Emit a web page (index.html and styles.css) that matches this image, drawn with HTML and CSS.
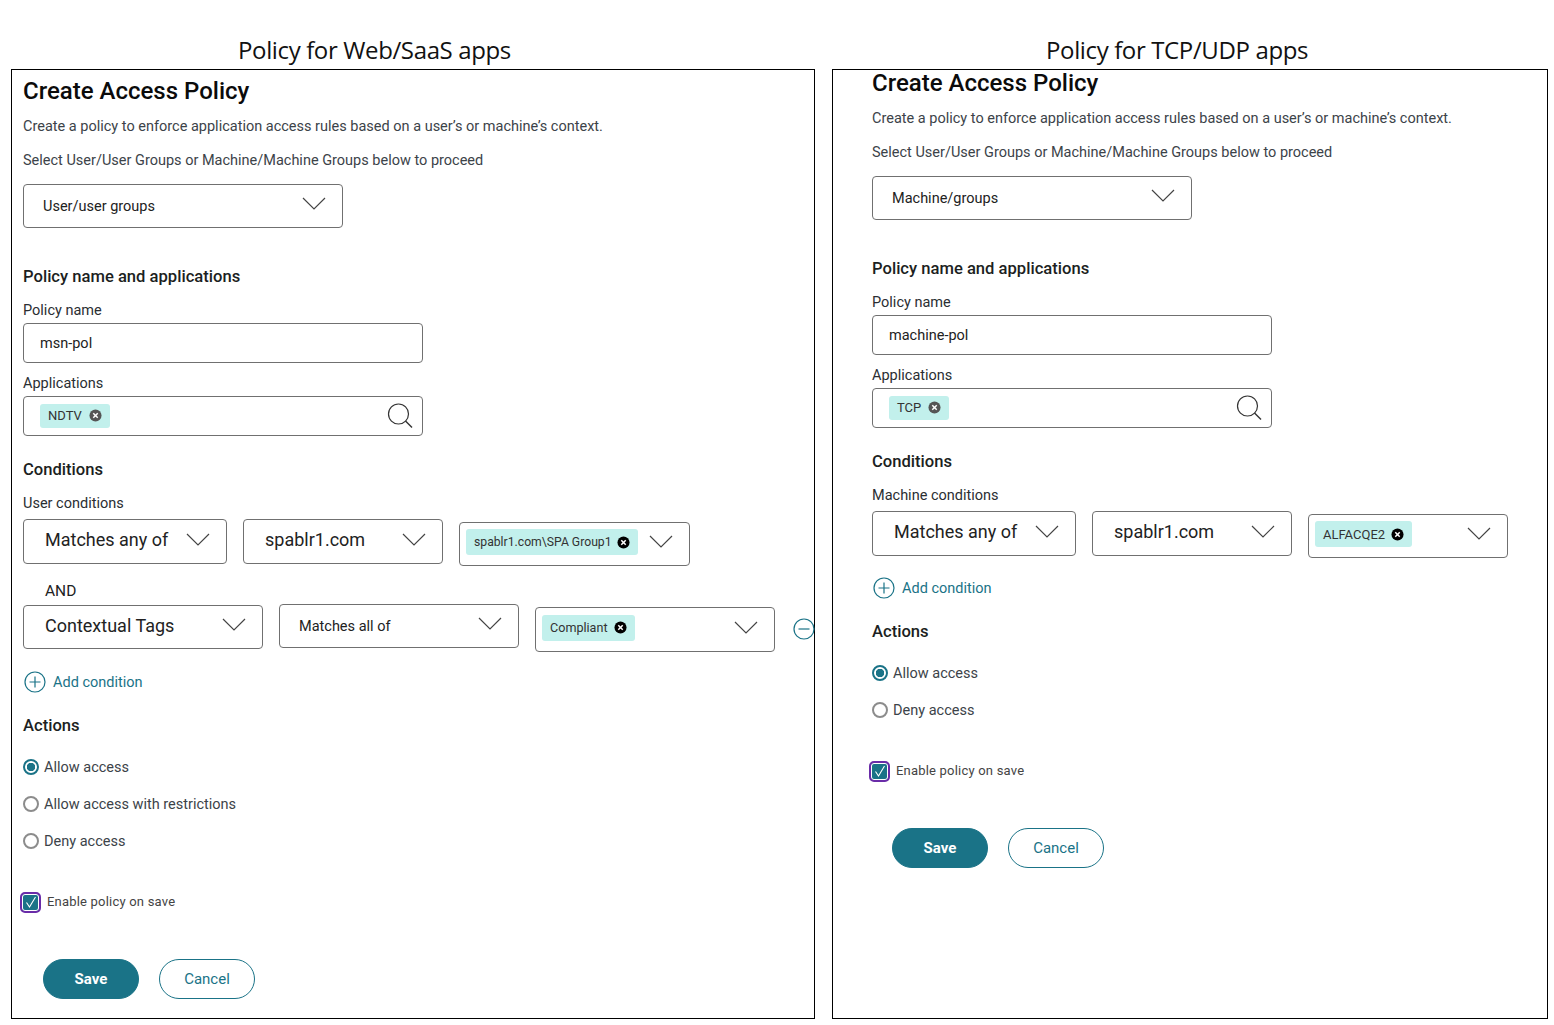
FILE: index.html

```html
<!DOCTYPE html>
<html lang="en">
<head>
  <meta charset="UTF-8" />
  <title>Access policy</title>
  <link rel="stylesheet" href="styles.css">
</head>
<body>
<svg class="defs" width="0" height="0">
  <symbol id="chev" viewBox="0 0 24 13"><polyline points="1,1 12,12 23,1" fill="none" stroke="#444" stroke-width="1.2"/></symbol>
  <symbol id="search" viewBox="0 0 26 26"><circle cx="11.5" cy="11" r="10" fill="none" stroke="#333" stroke-width="1.2"/><line x1="18.5" y1="18" x2="25" y2="24.5" stroke="#333" stroke-width="1.4"/></symbol>
  <symbol id="close" viewBox="0 0 14 14"><circle cx="7" cy="7" r="6.5" fill="currentColor"/><path d="M4.6 4.6l4.8 4.8M9.4 4.6l-4.8 4.8" stroke="#fff" stroke-width="1.6"/></symbol>
  <symbol id="plus" viewBox="0 0 22 22"><circle cx="11" cy="11" r="10" fill="none" stroke="#1a7387" stroke-width="1.2"/><path d="M11 5.5v11M5.5 11h11" stroke="#1a7387" stroke-width="1.2"/></symbol>
  <symbol id="minus" viewBox="0 0 22 22"><circle cx="11" cy="11" r="10" fill="none" stroke="#1a7387" stroke-width="1.2"/><path d="M5.5 11h11" stroke="#1a7387" stroke-width="1.2"/></symbol>
  <symbol id="tick" viewBox="0 0 14 14"><polyline points="2.5,7.5 5.5,12 11.5,2" fill="none" stroke="#fff" stroke-width="1.1"/></symbol>
</svg>

<div class="page">

  <div class="column column-web">
    <div class="caption">Policy for Web/SaaS apps</div>
    <div class="panel">
      <h1>Create Access Policy</h1>
      <p class="desc">Create a policy to enforce application access rules based on a user’s or machine’s context.</p>
      <p class="desc desc-next">Select User/User Groups or Machine/Machine Groups below to proceed</p>
      <div class="select w320 top-select"><span>User/user groups</span><svg class="chev"><use href="#chev"/></svg></div>

      <h2 class="h-policy">Policy name and applications</h2>
      <div class="label first-label">Policy name</div>
      <div class="input">msn-pol</div>
      <div class="label">Applications</div>
      <div class="input input-app">
        <span class="chip">NDTV <svg class="x x-grey"><use href="#close"/></svg></span>
        <svg class="search"><use href="#search"/></svg>
      </div>

      <h2 class="h-conditions">Conditions</h2>
      <div class="label first-label">User conditions</div>
      <div class="row row-first">
        <div class="select big w204"><span>Matches any of</span><svg class="chev"><use href="#chev"/></svg></div>
        <div class="select big w200"><span>spablr1.com</span><svg class="chev"><use href="#chev"/></svg></div>
        <div class="select tags w231 down3"><span class="chip chip-small">spablr1.com\SPA Group1 <svg class="x"><use href="#close"/></svg></span><svg class="chev"><use href="#chev"/></svg></div>
      </div>
      <div class="and">AND</div>
      <div class="row">
        <div class="select big short w240 down1"><span>Contextual Tags</span><svg class="chev"><use href="#chev"/></svg></div>
        <div class="select w240"><span>Matches all of</span><svg class="chev"><use href="#chev"/></svg></div>
        <div class="select tags tall w240 down3"><span class="chip chip-mid chip-tight">Compliant <svg class="x"><use href="#close"/></svg></span><svg class="chev"><use href="#chev"/></svg></div>
        <svg class="remove"><use href="#minus"/></svg>
      </div>
      <div class="add"><svg class="add-icon"><use href="#plus"/></svg>Add condition</div>

      <h2 class="h-actions">Actions</h2>
      <div class="radios">
        <div class="radio on">Allow access</div>
        <div class="radio">Allow access with restrictions</div>
        <div class="radio">Deny access</div>
      </div>
      <div class="enable"><span class="check"><svg class="tick"><use href="#tick"/></svg></span>Enable policy on save</div>
      <div class="buttons">
        <div class="btn btn-save">Save</div>
        <div class="btn btn-cancel">Cancel</div>
      </div>
    </div>
  </div>

  <div class="column column-tcp">
    <div class="caption">Policy for TCP/UDP apps</div>
    <div class="panel">
      <h1>Create Access Policy</h1>
      <p class="desc">Create a policy to enforce application access rules based on a user’s or machine’s context.</p>
      <p class="desc desc-next">Select User/User Groups or Machine/Machine Groups below to proceed</p>
      <div class="select w320 top-select"><span>Machine/groups</span><svg class="chev"><use href="#chev"/></svg></div>

      <h2 class="h-policy">Policy name and applications</h2>
      <div class="label first-label">Policy name</div>
      <div class="input">machine-pol</div>
      <div class="label">Applications</div>
      <div class="input input-app">
        <span class="chip">TCP <svg class="x x-grey"><use href="#close"/></svg></span>
        <svg class="search"><use href="#search"/></svg>
      </div>

      <h2 class="h-conditions">Conditions</h2>
      <div class="label first-label">Machine conditions</div>
      <div class="row row-first">
        <div class="select big w204"><span>Matches any of</span><svg class="chev"><use href="#chev"/></svg></div>
        <div class="select big w200"><span>spablr1.com</span><svg class="chev"><use href="#chev"/></svg></div>
        <div class="select tags w200 down3"><span class="chip chip-mid">ALFACQE2 <svg class="x"><use href="#close"/></svg></span><svg class="chev"><use href="#chev"/></svg></div>
      </div>
      <div class="add add-tcp"><svg class="add-icon"><use href="#plus"/></svg>Add condition</div>

      <h2 class="h-actions">Actions</h2>
      <div class="radios">
        <div class="radio on">Allow access</div>
        <div class="radio">Deny access</div>
      </div>
      <div class="enable"><span class="check"><svg class="tick"><use href="#tick"/></svg></span>Enable policy on save</div>
      <div class="buttons">
        <div class="btn btn-save">Save</div>
        <div class="btn btn-cancel">Cancel</div>
      </div>
    </div>
  </div>

</div>
</body>
</html>
```

FILE: styles.css

```css
* { box-sizing: border-box; }
body {
  margin: 0;
  padding-top: 35px;
  background: #fff;
  font-family: Roboto, "Liberation Sans", sans-serif;
  font-size: 14.5px;
  color: #2f3438;
}
.defs { position: absolute; }
.page {
  display: flex;
  gap: 17px;
  padding-left: 11px;
}
.column-web { width: 804px; }
.column-tcp { width: 716px; }

.caption {
  font-family: "Open Sans", sans-serif;
  font-size: 24px;
  line-height: 30px;
  letter-spacing: -0.37px;
  color: #111;
  margin-bottom: 4px;
}
.column-web .caption { padding-left: 227px; }
.column-tcp .caption { padding-left: 214px; }

.panel {
  height: 950px;
  border: 1px solid #000;
  padding: 6px 0 0 11px;
}
.column-tcp .panel { padding-left: 39px; }

h1 {
  margin: 0;
  font-size: 24px;
  line-height: 30px;
  font-weight: 500;
  color: #0b0b0b;
}
.column-tcp h1 { margin-top: -8px; }
h2 {
  margin: 0;
  font-size: 16.6px;
  line-height: 24px;
  font-weight: 500;
  color: #1c1f22;
}
.desc {
  height: 20px;
  margin: 10px 0 0;
  line-height: 22px;
  color: #3c4349;
}
.desc-next { margin-top: 14px; }

.select {
  display: flex;
  align-items: center;
  justify-content: space-between;
  flex: none;
  height: 44px;
  padding: 0 16px 0 19px;
  border: 1px solid #707070;
  border-radius: 4px;
  background: #fff;
  color: #222;
}
.top-select { margin-top: 14px; }
.big { height: 45px; padding-left: 21px; font-size: 18px; }
.big span { margin-bottom: 4px; }
.short { height: 44px; }
.tall { height: 45px; }
.tags { padding-left: 6px; }
.w320 { width: 320px; }
.w240 { width: 240px; }
.w231 { width: 231px; }
.w204 { width: 204px; }
.w200 { width: 200px; }
.down1 { margin-top: 1px; }
.down3 { margin-top: 3px; }

.chev {
  width: 24px;
  height: 13px;
  margin-bottom: 5px;
  flex: none;
}

.h-policy { margin-top: 37px; }
.h-conditions { margin-top: 22px; }
.h-actions { margin-top: 20px; }
.label {
  height: 20px;
  margin-top: 10px;
  line-height: 22px;
  color: #2a2e32;
}
.first-label { margin-top: 11px; }

.input {
  display: flex;
  align-items: center;
  width: 400px;
  height: 40px;
  margin-top: 3px;
  padding-left: 16px;
  border: 1px solid #707070;
  border-radius: 4px;
  color: #222;
}
.input-app {
  justify-content: space-between;
  padding-right: 9px;
}

.chip {
  display: inline-flex;
  align-items: center;
  height: 24px;
  padding: 0 8px;
  border-radius: 3px;
  background: #c2f0ec;
  font-size: 13px;
  color: #333;
  white-space: pre;
}
.input-app .chip { margin-bottom: 1px; }
.chip-small { height: 26px; font-size: 12.2px; margin-bottom: 4px; }
.chip-mid { height: 26px; margin-bottom: 4px; }
.chip-tight { font-size: 12.6px; }
.x {
  width: 13px;
  height: 13px;
  margin-left: 3px;
  color: #000;
}
.chip-small .x { margin-left: 2px; }
.x-grey { color: #555; margin-left: 4px; }
.search { width: 26px; height: 26px; }

.row {
  display: flex;
  align-items: flex-start;
  gap: 16px;
  height: 48px;
}
.row-first { margin-top: 6px; height: 47px; }
.and {
  margin: 15px 0 3px 22px;
  line-height: 20px;
  font-size: 15.5px;
  color: #222;
}
.remove {
  width: 22px;
  height: 22px;
  flex: none;
  margin: 14px 0 0 2px;
}

.add {
  display: flex;
  align-items: center;
  gap: 7px;
  height: 24px;
  margin: 18px 0 0 1px;
  color: #1a7387;
}
.add-icon { width: 22px; height: 22px; }

.radios {
  display: flex;
  flex-direction: column;
  gap: 17px;
  margin-top: 20px;
}
.radio {
  display: flex;
  align-items: center;
  height: 20px;
  line-height: 20px;
  color: #3c4349;
}
.radio::before {
  content: "";
  box-sizing: border-box;
  width: 16px;
  height: 16px;
  margin: -2px 5px 0 0;
  border: 2px solid #8c8c8c;
  border-radius: 50%;
}
.radio.on::before {
  border-color: #1a7387;
  background: radial-gradient(circle, #1a7387 0 4px, #fff 4.5px);
}

.enable {
  display: flex;
  align-items: center;
  height: 24px;
  margin: 37px 0 0 -3px;
  font-size: 13px;
  letter-spacing: 0.2px;
  color: #444;
}
.check {
  display: flex;
  align-items: center;
  justify-content: center;
  width: 21px;
  height: 21px;
  margin: 2px 6px 0 0;
  border: 2px solid #6a2ca8;
  border-radius: 5px;
  background: #1a7387;
  box-shadow: inset 0 0 0 1px #fff;
}
.tick { width: 14px; height: 14px; }

.buttons {
  display: flex;
  gap: 20px;
  margin: 46px 0 0 20px;
}
.btn {
  display: flex;
  align-items: center;
  justify-content: center;
  width: 96px;
  height: 40px;
  border-radius: 20px;
  border: 1px solid #1a7387;
  font-size: 15px;
}
.btn-save { background: #1a7387; color: #fff; font-weight: 700; }
.btn-cancel { color: #1a7387; }
```
